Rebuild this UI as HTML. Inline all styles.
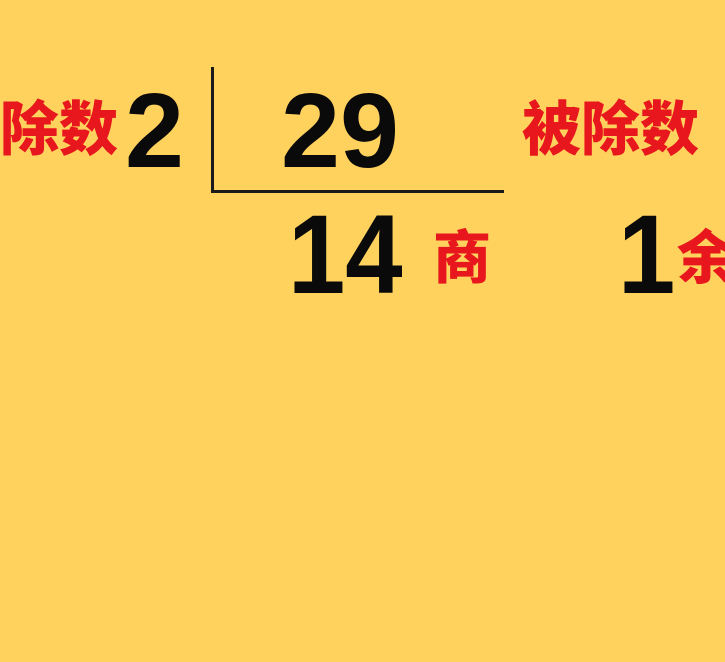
<!DOCTYPE html>
<html><head><meta charset="utf-8"><style>
html,body{margin:0;padding:0;}
body{width:725px;height:662px;background:#ffd25e;position:relative;overflow:hidden;}
.n{position:absolute;font-family:"Liberation Sans",sans-serif;font-weight:bold;color:#0a0a0a;line-height:1;white-space:nowrap;transform:scaleX(0.92);transform-origin:0 0;}
.c{position:absolute;font-family:"Liberation Sans","Noto Sans CJK SC",sans-serif;font-weight:900;color:#e8161d;line-height:1;white-space:nowrap;}
.l{position:absolute;background:#1a1a1a;}
</style></head><body>
<div class="c" style="left:0;top:101px;font-size:59px;">除数</div>
<div class="n" style="left:125px;top:78px;font-size:106px;transform:none;">2</div>
<div class="l" style="left:211px;top:67px;width:3px;height:126px;"></div>
<div class="l" style="left:211px;top:190px;width:293px;height:3px;"></div>
<div class="n" style="left:281px;top:78px;font-size:106px;transform:none;">29</div>
<div class="c" style="left:522px;top:101px;font-size:59px;">被除数</div>
<div class="n" style="left:288px;top:199px;font-size:112px;">14</div>
<div class="c" style="left:433px;top:230px;font-size:58px;">商</div>
<div class="n" style="left:618px;top:199px;font-size:112px;">1</div>
<div class="c" style="left:677px;top:230px;font-size:58px;">余</div>
</body></html>
